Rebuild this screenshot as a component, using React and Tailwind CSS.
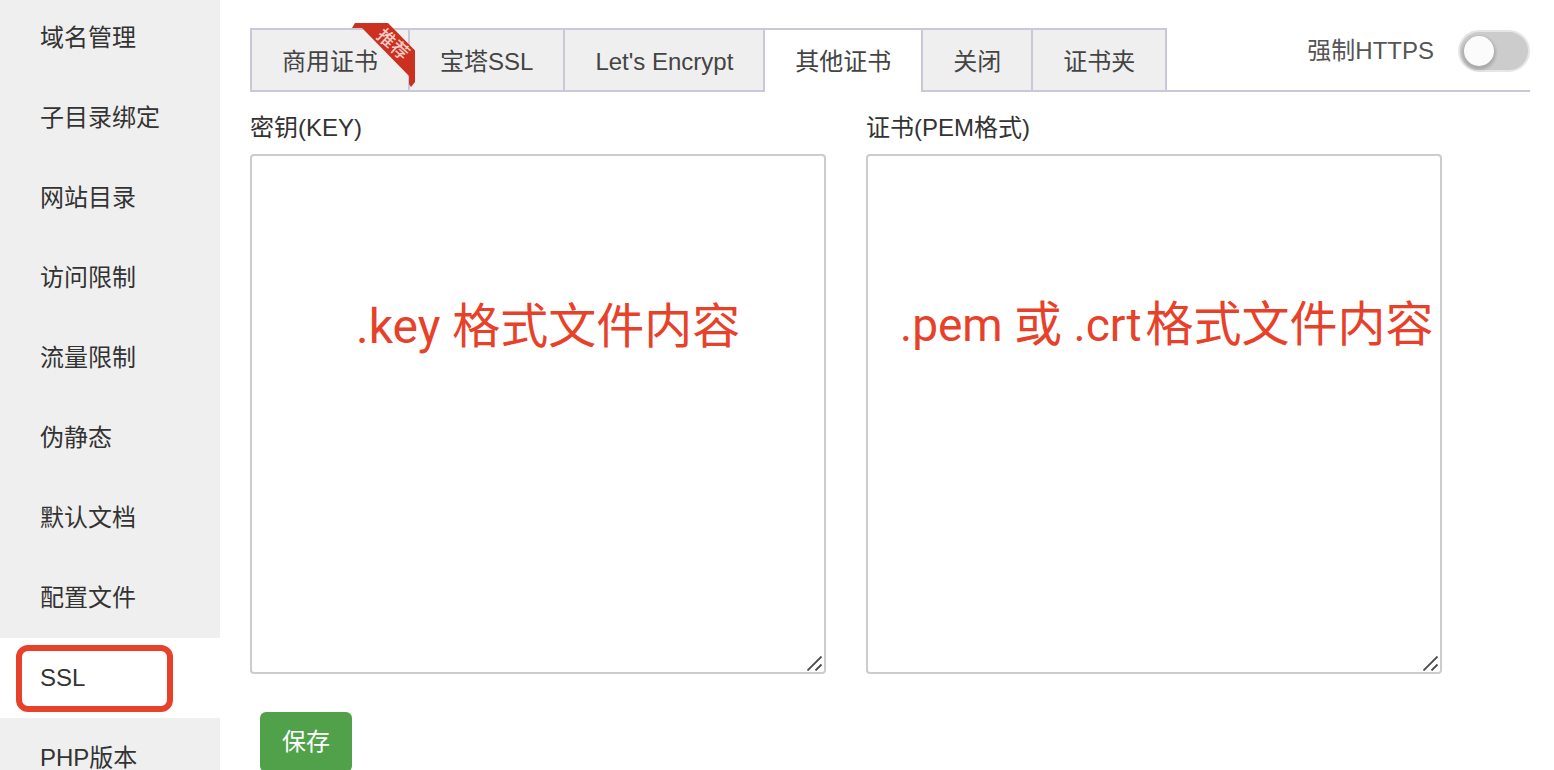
import { useState } from "react";

const menu = [
  "域名管理",
  "子目录绑定",
  "网站目录",
  "访问限制",
  "流量限制",
  "伪静态",
  "默认文档",
  "配置文件",
  "SSL",
  "PHP版本",
];

const tabs = ["商用证书", "宝塔SSL", "Let's Encrypt", "其他证书", "关闭", "证书夹"];

function Ribbon() {
  return (
    <svg
      className="pointer-events-none absolute -top-2 -right-2 z-10"
      width="66"
      height="66"
      viewBox="0 0 66 66"
      aria-hidden="true"
    >
      <path d="M2 6 L5 1 H38 L65 28.500 V60 L61 65 L59 62 V54 L14 8 L12 6 Z" fill="#cb3020" />
      <text
        x="43"
        y="22.500"
        transform="rotate(42 43 22.500)"
        textAnchor="middle"
        dominantBaseline="central"
        fontSize="18"
        fontWeight="500"
        fill="#f3cbc4"
      >
        推荐
      </text>
    </svg>
  );
}

function Grip() {
  return (
    <svg
      className="pointer-events-none absolute right-[3px] bottom-[3px] text-[#4a4a4a]"
      width="16"
      height="15"
      viewBox="0 0 16 15"
      aria-hidden="true"
    >
      <path d="M0.500 14.500 L14.500 0.500 M8.500 14.500 L14.500 8.500" stroke="currentColor" strokeWidth="1.800" fill="none" />
    </svg>
  );
}

function Field({ id, label, children }) {
  return (
    <div className="w-[576px]">
      <label htmlFor={id} className="block h-9 leading-9">
        {label}
      </label>
      <div className="relative mt-2">
        <textarea
          id={id}
          className="block h-[520px] w-full resize-none rounded border-2 border-[#ccc] bg-white p-3 outline-none"
        />
        {children}
        <Grip />
      </div>
    </div>
  );
}

export default function App() {
  const [activeTab, setActiveTab] = useState("其他证书");
  const [forced, setForced] = useState(false);

  return (
    <div className="flex h-screen overflow-hidden bg-white font-['Liberation_Sans','Noto_Sans_CJK_SC',sans-serif] text-2xl text-[#333]">
      <nav className="w-[220px] shrink-0 bg-[#efefef]">
        <ul className="-mt-0.5">
          {menu.map((item) => (
            <li key={item} className={item === "SSL" ? "relative bg-white" : ""}>
              <a href="#" className="block h-20 pl-10 leading-[80px]">
                {item}
              </a>
              {item === "SSL" && (
                <span className="pointer-events-none absolute top-[7px] left-4 h-[67px] w-[157px] rounded-xl border-6 border-[#e8412a]" />
              )}
            </li>
          ))}
        </ul>
      </nav>

      <main className="min-w-0 flex-1 pt-7 pr-6 pl-[30px]">
        <div className="flex h-16">
          <div role="tablist" className="flex border-r-2 border-[#cac7d8] text-[#444]">
            {tabs.map((tab, i) => (
              <button
                key={tab}
                type="button"
                role="tab"
                aria-selected={tab === activeTab}
                onClick={() => setActiveTab(tab)}
                className={
                  tab === activeTab
                    ? "relative border-t-2 border-l-2 border-[#cac7d8] bg-white px-[30px] pt-1 pb-0.5 whitespace-nowrap"
                    : "relative border-y-2 border-l-2 border-[#cac7d8] bg-[#efefef] px-[30px] pt-1 whitespace-nowrap"
                }
              >
                {tab}
                {i === 0 && <Ribbon />}
              </button>
            ))}
          </div>
          <div className="flex flex-1 justify-end border-b-2 border-[#cac7d8]">
            <label className="flex h-[46px] items-center gap-6 text-[#555]">
              <span>强制HTTPS</span>
              <span className="relative flex">
                <input
                  type="checkbox"
                  role="switch"
                  checked={forced}
                  onChange={(e) => setForced(e.target.checked)}
                  className="peer h-[42px] w-[72px] appearance-none rounded-full border-2 border-[#e6e6e6] bg-[#ccc] checked:bg-[#4fa34b]"
                />
                <span className="pointer-events-none absolute top-[6px] left-[6px] size-[30px] rounded-full bg-[#fbfbfb] shadow-[0_2px_3px_2px_rgba(0,0,0,0.16)] peer-checked:left-9" />
              </span>
            </label>
          </div>
        </div>

        <div className="mt-[18px] flex gap-10">
          <Field id="key" label="密钥(KEY)">
            <p className="pointer-events-none absolute top-[138px] left-[106px] font-['Roboto','Noto_Sans_CJK_SC',sans-serif] text-5xl leading-[70px] whitespace-nowrap text-[#e8412a]">
              .key 格式文件内容
            </p>
          </Field>
          <Field id="pem" label="证书(PEM格式)">
            <p className="pointer-events-none absolute top-[136px] left-[34px] font-['Roboto','Noto_Sans_CJK_SC',sans-serif] text-[46px] leading-[70px] whitespace-nowrap text-[#e8412a]">
              .pem <span className="text-5xl">或</span> .crt
              <span className="ml-1 text-5xl">格式文件内容</span>
            </p>
          </Field>
        </div>

        <button type="button" className="mt-[38px] ml-2.5 h-[60px] rounded-md bg-[#50a14a] px-[22px] text-white">
          保存
        </button>
      </main>
    </div>
  );
}
